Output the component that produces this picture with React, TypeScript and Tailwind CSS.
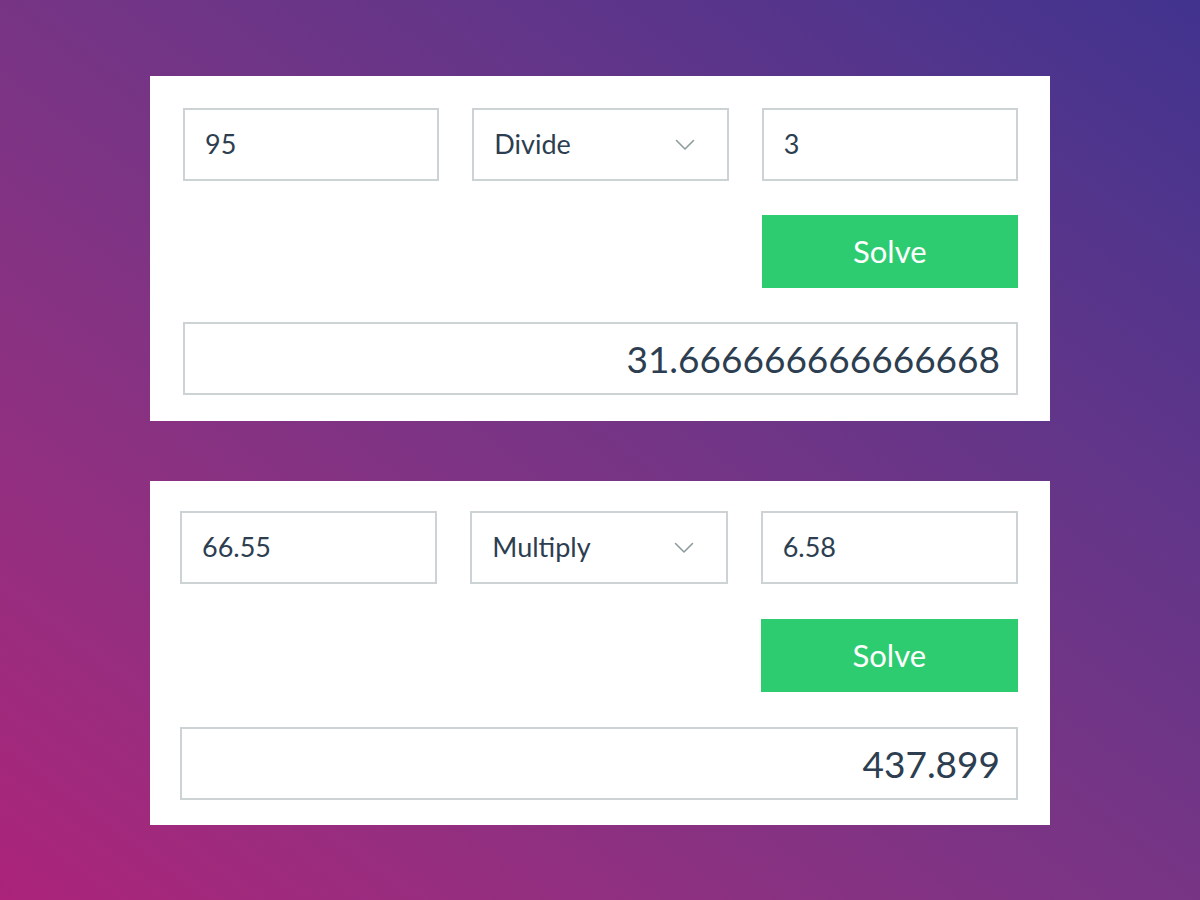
type Calc = {
  a: string;
  op: string;
  b: string;
  result: string;
  pad: string;
  gap: string;
};

const calcs: Calc[] = [
  { a: '95', op: 'Divide', b: '3', result: '31.666666666666668', pad: 'pl-[33px] pr-[32px] pt-[32px] pb-[26px] mt-[76px]', gap: 'mt-[34px]' },
  { a: '66.55', op: 'Multiply', b: '6.58', result: '437.899', pad: 'pl-[30px] pr-[32px] pt-[30px] pb-[25px] mt-[60px]', gap: 'mt-[35px]' },
];

const Chevron = () => (
  <svg width="20" height="12" viewBox="0 0 20 12" fill="none" className="mr-[12px]">
    <polyline points="1.5,1.5 10,10 18.5,1.5" stroke="#8d9c9d" strokeWidth="1.6" strokeLinecap="round" strokeLinejoin="round" />
  </svg>
);

function Field({ children }: { children: React.ReactNode }) {
  return (
    <div className="h-[73px] border-2 border-[#cdd2d5] bg-white flex items-center px-[20px] text-[27px] text-[#2c3e50]">
      {children}
    </div>
  );
}

function Card({ c }: { c: Calc }) {
  return (
    <div className={`w-[900px] bg-white ${c.pad}`}>
      <div className="grid grid-cols-3 gap-[33px]">
        <Field>{c.a}</Field>
        <Field>
          <span className="flex-1">{c.op}</span>
          <Chevron />
        </Field>
        <Field>{c.b}</Field>
      </div>
      <div className={`grid grid-cols-3 gap-[33px] ${c.gap}`}>
        <div className="col-start-3 h-[73px] bg-[#2ecc71] text-white text-[31px] flex items-center justify-center">
          Solve
        </div>
      </div>
      <div className={`${c.gap} h-[73px] border-2 border-[#cdd2d5] flex items-center justify-end pr-[16px] text-[37px] text-[#2c3e50]`}>
        {c.result}
      </div>
    </div>
  );
}

export default function App() {
  return (
    <div
      className="w-[1200px] h-[900px] flex flex-col items-center bg-gradient-to-tr from-[#ab237a] to-[#41338e]"
      style={{ fontFamily: 'Lato, "Open Sans", sans-serif' }}
    >
      {calcs.map((c) => (
        <Card key={c.op} c={c} />
      ))}
    </div>
  );
}
